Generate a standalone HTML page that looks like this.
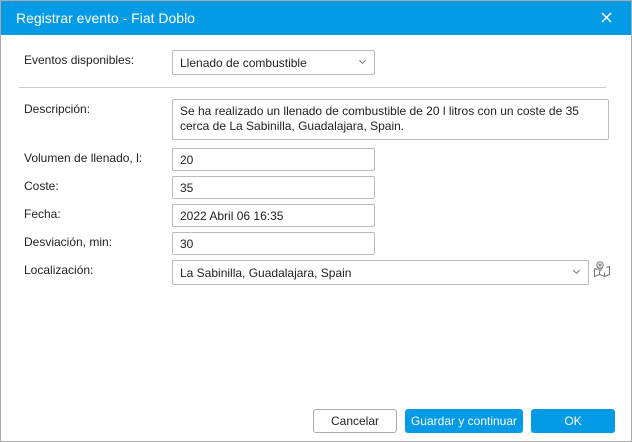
<!DOCTYPE html><html><head><style>
body{margin:0;width:632px;height:442px;overflow:hidden;font-family:"Liberation Sans",sans-serif;font-size:12px;color:#222;}
.d{position:absolute;left:0;top:0;width:630px;height:440px;border:1px solid #aaa;background:#fff;}
.h{position:absolute;left:0;top:0;width:630px;height:34px;background:#039be5;color:#fff;font-size:14px;}
.h span{position:absolute;left:15px;top:9px}
.l{position:absolute;left:23px}
.f{position:absolute;left:171px;width:201px;height:21px;border:1px solid #bbb;border-radius:2px;box-sizing:content-box;}
.f span{position:absolute;left:7px;top:4px}
.ch{position:absolute;right:9px;top:7px;width:4px;height:4px;border-right:1px solid #777;border-bottom:1px solid #777;transform:rotate(45deg)}
.b{position:absolute;top:408px;height:24px;border-radius:3px;text-align:center;line-height:24px;}
</style></head><body><div class="d">
<div class="h"><span>Registrar evento - Fiat Doblo</span>
<svg style="position:absolute;left:600px;top:11px" width="11" height="11"><path d="M1 1L10 10M10 1L1 10" stroke="#fff" stroke-width="1.5"/></svg></div>
<div class="l" style="top:52px">Eventos disponibles:</div>
<div class="f" style="top:49px;height:23px"><span style="top:5px">Llenado de combustible</span><div class="ch"></div></div>
<div style="position:absolute;left:18px;top:86px;width:587px;height:1px;background:#ccc"></div>
<div class="l" style="top:101px">Descripción:</div>
<div class="f" style="top:98px;width:435px;height:39px"><span style="top:4px;line-height:15px">Se ha realizado un llenado de combustible de 20 l litros con un coste de 35<br>cerca de La Sabinilla, Guadalajara, Spain.</span></div>
<div class="l" style="top:150px">Volumen de llenado, l:</div>
<div class="f" style="top:147px"><span>20</span></div>
<div class="l" style="top:178px">Coste:</div>
<div class="f" style="top:175px"><span>35</span></div>
<div class="l" style="top:206px">Fecha:</div>
<div class="f" style="top:203px"><span>2022 Abril 06 16:35</span></div>
<div class="l" style="top:234px">Desviación, min:</div>
<div class="f" style="top:231px"><span>30</span></div>
<div class="l" style="top:262px">Localización:</div>
<div class="f" style="top:259px;width:415px;height:23px"><span style="top:5px">La Sabinilla, Guadalajara, Spain</span><div class="ch"></div></div>
<svg style="position:absolute;left:592px;top:259px" width="18" height="18" fill="none" stroke="#777" stroke-width="1"><path d="M1.5 8.5v8l5-2 5 2 5-2v-8l-3 1M1.5 8.5l3 1M6.5 14.5v-3M11.5 16.5v-4"/><circle cx="7" cy="5" r="3.2"/><circle cx="7" cy="5" r="1"/><path d="M4.3 6.8L7 11l2.7-4.2"/></svg>
<div class="b" style="left:312px;width:82px;border:1px solid #aaa;background:#fff;height:22px;line-height:22px">Cancelar</div>
<div class="b" style="left:404px;width:118px;background:#039be5;color:#fff">Guardar y continuar</div>
<div class="b" style="left:530px;width:84px;background:#039be5;color:#fff">OK</div>
</div></body></html>
